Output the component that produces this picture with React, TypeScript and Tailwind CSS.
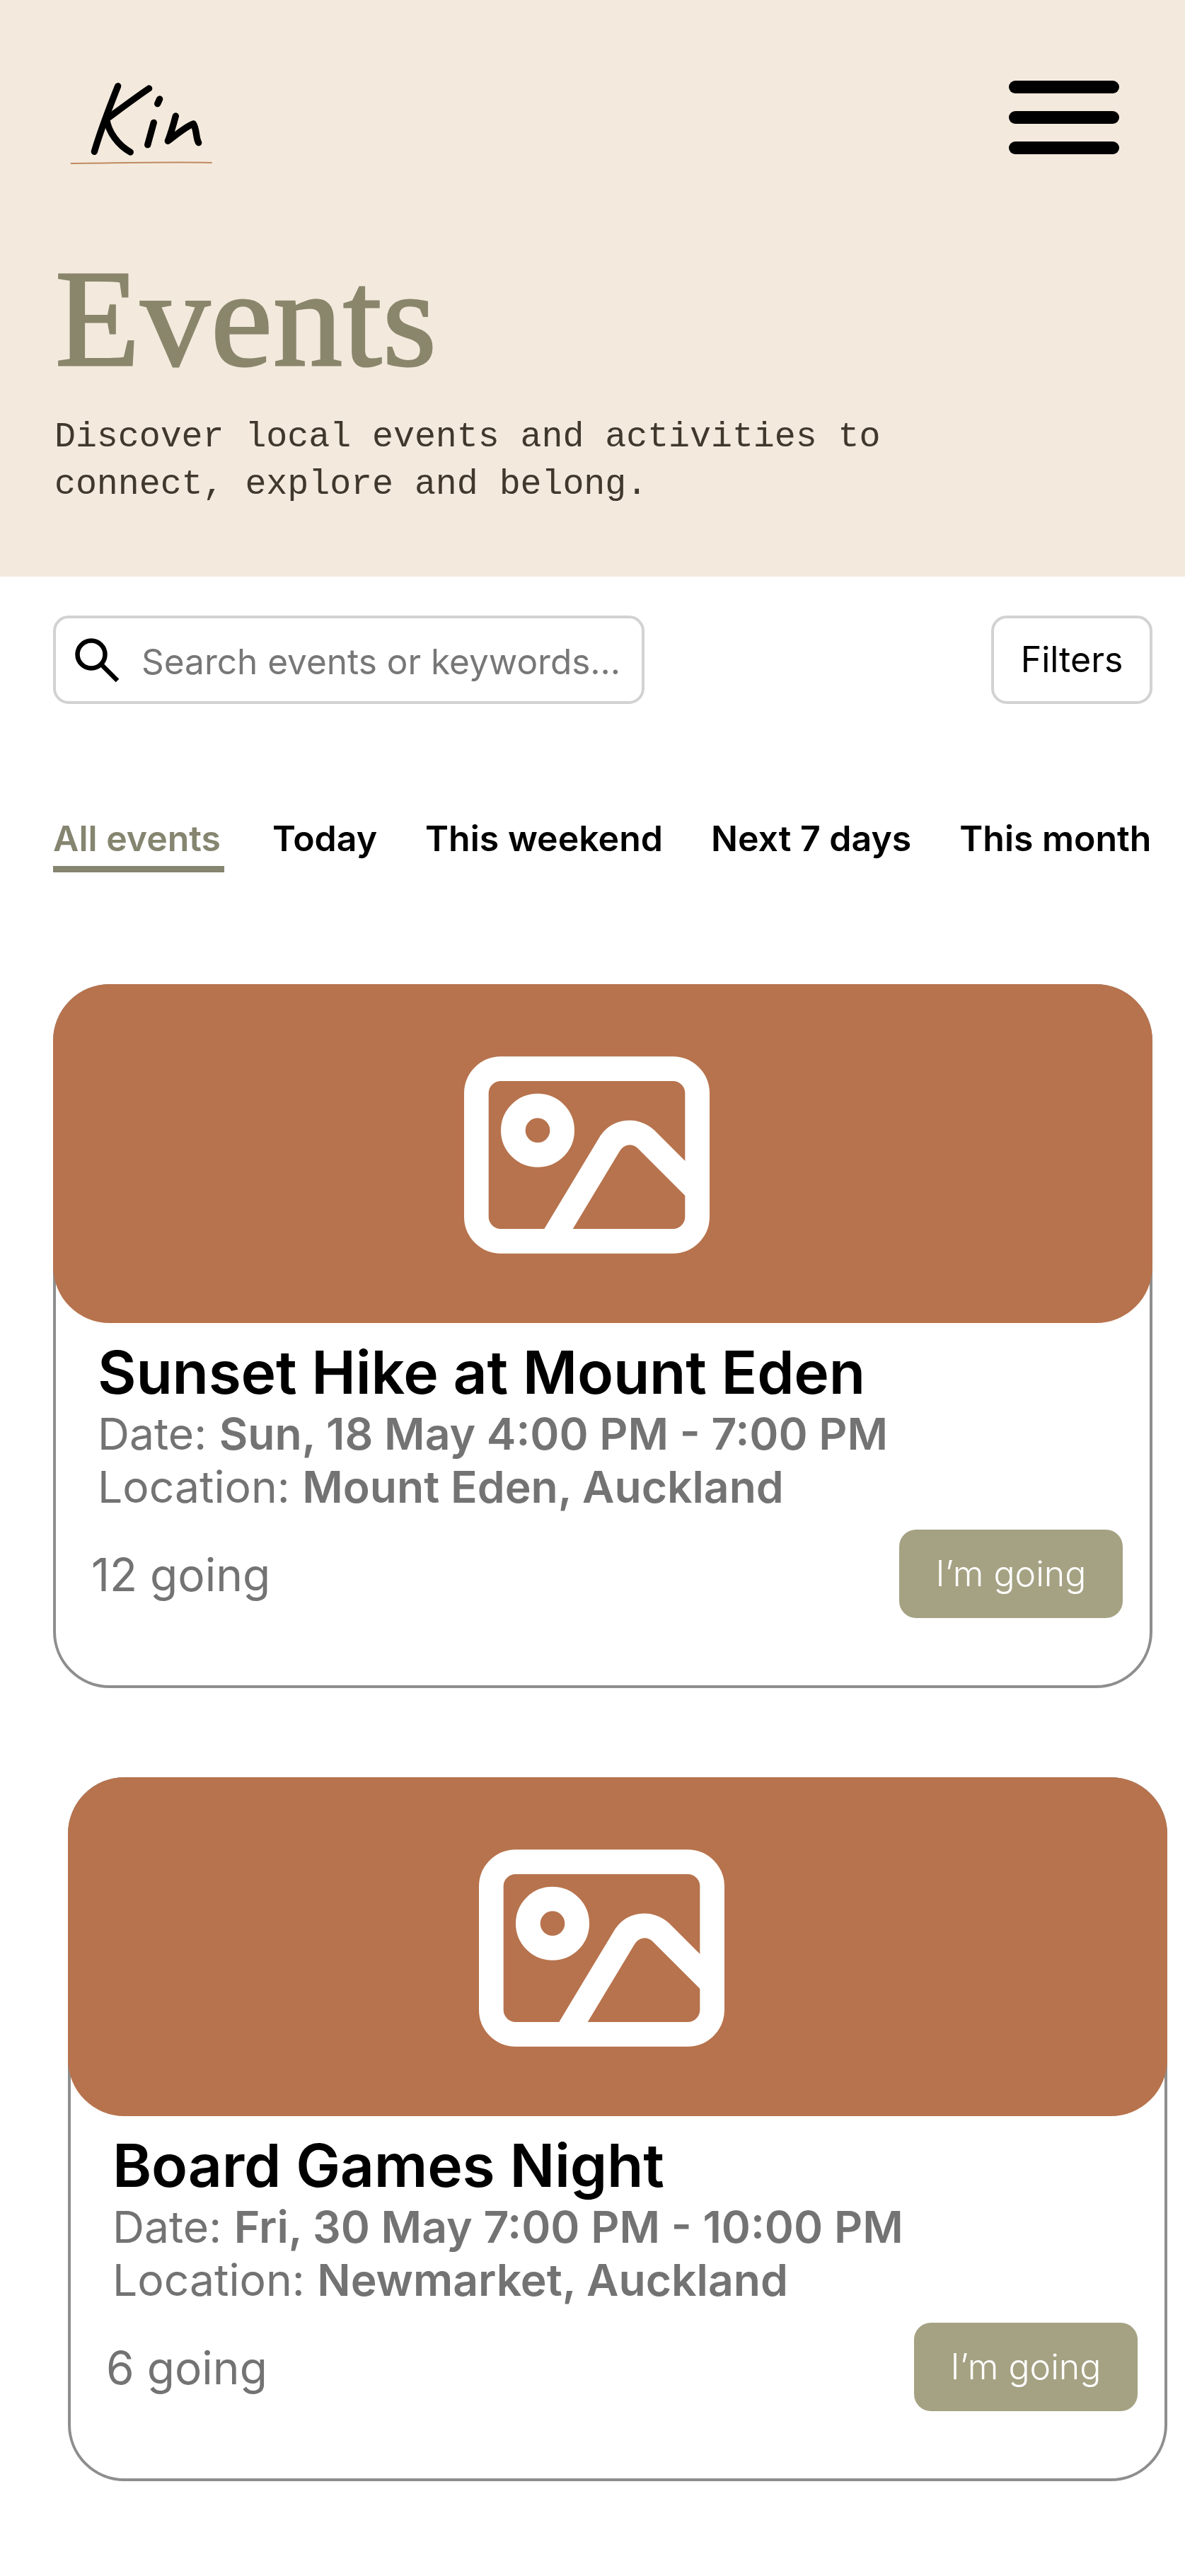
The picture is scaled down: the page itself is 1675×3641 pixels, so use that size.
import React from "react";

function PlaceholderIcon() {
  return (
    <svg viewBox="107 70 1041 835" className="w-[347px] h-[279px]" fill="none" stroke="#ffffff" strokeWidth="104" strokeLinejoin="round">
      <rect x="159" y="122" width="937" height="731" rx="104" />
      <circle cx="419" cy="383" r="104" />
      <path d="M476 853 L720 448 C755 385 830 375 880 422 L1096 638" />
    </svg>
  );
}

function Logo() {
  return (
    <svg viewBox="0 0 900 540" className="w-[300px] h-[180px]" fill="none" stroke="#000000" strokeLinecap="round" strokeLinejoin="round">
      <path d="M320 125 C290 200 250 300 220 403" strokeWidth="28" />
      <path d="M452 135 C400 170 340 215 272 265 C280 320 320 375 373 405" strokeWidth="28" />
      <path d="M497 180 L488 200" strokeWidth="28" />
      <path d="M472 280 L446 374" strokeWidth="28" />
      <path d="M565 252 C555 290 545 325 532 358 C570 330 610 295 640 285 C655 310 650 345 662 365" strokeWidth="28" />
      <path d="M122 453 C300 452 500 446 717 450" stroke="#c08a62" strokeWidth="6" />
    </svg>
  );
}

function Card({ title, date, location, going, className }: { title: string; date: string; location: string; going: string; className: string }) {
  return (
    <article className={`w-[1554px] h-[995px] rounded-[80px] border-[4px] border-[#8e8e8e] box-border ${className}`}>
      <div className="-m-[4px] h-[479px] rounded-[80px] bg-[#b7734d] flex justify-center pt-[102px] pr-[46px]">
        <PlaceholderIcon />
      </div>
      <div className="pl-[59px] pr-[38px] pt-[29px]">
        <h2 className="text-[84px] leading-[90px] font-semibold text-black tracking-[-0.25px]">{title}</h2>
        <p className="mt-[4px] text-[62.4px] leading-[75px] text-[#737373]">
          Date: <span className="font-semibold">{date}</span>
        </p>
        <p className="text-[62.4px] leading-[75px] text-[#737373]">
          Location: <span className="font-semibold">{location}</span>
        </p>
        <div className="mt-[23px] -ml-[9px] flex items-center justify-between">
          <span className="mt-[2px] text-[64px] leading-[80px] text-[#737373]">{going}</span>
          <button className="w-[316px] h-[125px] rounded-[24px] bg-[#a5a283] text-white text-[50px] font-light">I’m going</button>
        </div>
      </div>
    </article>
  );
}

export default function App() {
  return (
    <div className="w-[1675px] min-h-[3641px] bg-white font-['Inter',sans-serif] overflow-hidden">
      <header className="h-[815px] bg-[#f3eadd] pt-[80px]">
        <div className="flex items-start justify-between pl-[60px] pr-[93px]">
          <Logo />
          <div className="mt-[34px] flex w-[156px] flex-col gap-[25px]">
            <span className="h-[18px] rounded-full bg-black" />
            <span className="h-[18px] rounded-full bg-black" />
            <span className="h-[18px] rounded-full bg-black" />
          </div>
        </div>
        <h1 className="mt-[90px] pl-[78px] font-['Liberation_Serif',serif] text-[196px] leading-[200px] tracking-[1.1px] text-[#8a866c] [-webkit-text-stroke:3px_#8a866c]">Events</h1>
        <p className="mt-[34px] pl-[77px] font-['Liberation_Mono',monospace] text-[50px] leading-[67px] tracking-[-0.07px] text-[#40382c]">
          Discover local events and activities to
          <br />
          connect, explore and belong.
        </p>
      </header>

      <div className="mt-[55px] flex justify-between pl-[75px] pr-[46px]">
        <div className="flex h-[125px] w-[836px] items-center rounded-[22px] border-[4px] border-[#d2d2d2] pl-[27px]">
          <svg viewBox="0 0 64 64" className="h-[64px] w-[64px] shrink-0" fill="none" stroke="#000" strokeWidth="6.5">
            <circle cx="23" cy="24" r="19.5" />
            <path d="M37 38 L60 61" />
          </svg>
          <span className="ml-[30px] mt-[6px] text-[49.5px] text-[#777777] whitespace-nowrap">Search events or keywords...</span>
        </div>
        <button className="h-[125px] w-[228px] rounded-[22px] border-[4px] border-[#d2d2d2] text-[50px] text-black">Filters</button>
      </div>

      <nav className="mt-[160px] flex items-start gap-[68px] pl-[75px] text-[50px] font-semibold leading-[60px] text-black whitespace-nowrap">
        <span className="border-b-[9px] border-[#858570] pb-[9px] pr-[5px] text-[#858570]">All events</span>
        <span>Today</span>
        <span>This weekend</span>
        <span>Next 7 days</span>
        <span>This month</span>
      </nav>

      <main className="mt-[158px] pb-[135px]">
        <Card className="ml-[75px]" title="Sunset Hike at Mount Eden" date="Sun, 18 May 4:00 PM - 7:00 PM" location="Mount Eden, Auckland" going="12 going" />
        <Card className="ml-[96px] mt-[126px]" title="Board Games Night" date="Fri, 30 May 7:00 PM - 10:00 PM" location="Newmarket, Auckland" going="6 going" />
      </main>
    </div>
  );
}
